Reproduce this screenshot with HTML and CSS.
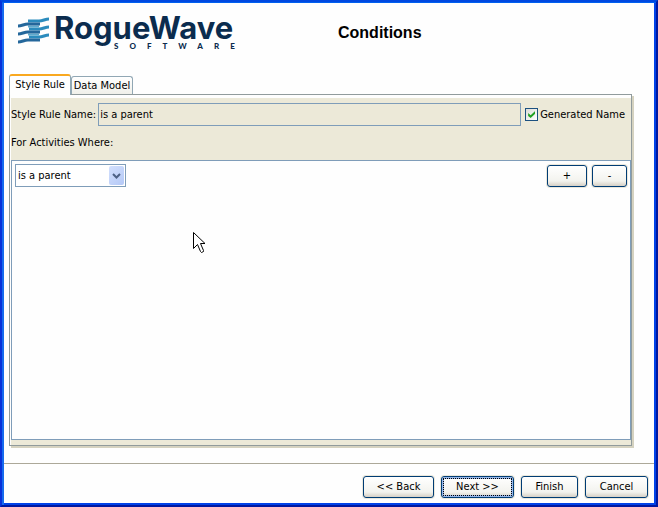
FILE: index.html
```html
<!DOCTYPE html>
<html lang="en">
<head>
    <meta charset="UTF-8">
    <meta name="viewport" content="width=device-width, initial-scale=1.0">
    <title>Conditions</title>
    <link rel="stylesheet" href="styles.css">
</head>
<body>

    <div class="window">
        <header class="header">
            <div class="logo">
                <svg class="logo-mark" width="32" height="27" viewBox="0 0 32 27" fill="none" stroke-width="3">
                    <path stroke="#2b8bbd" d="M10 4H21C25 4 27 2 31 2M11 12H21C25 12 27 10 31 10M11 20H21C25 20 27 18 31 18"/>
                    <path stroke="#5fa9cc" stroke-width="2" d="M10 9.500H21M10 17.500H21"/>
                    <path stroke="#24679b" d="M0 9C4 9 6 7 10 7H22M0 17C4 17 6 15 10 15H22M0 25C4 25 6 23 10 23H22"/>
                </svg>
                <div class="logo-text">
                    <div class="logo-name">RogueWave</div>
                    <div class="logo-sub">SOFTWARE</div>
                </div>
            </div>
            <h1 class="title">Conditions</h1>
        </header>

        <main class="content">
            <div class="tabs" role="tablist">
                <button class="tab tab-active" type="button" role="tab" aria-selected="true">Style Rule</button>
                <button class="tab" type="button" role="tab" aria-selected="false">Data Model</button>
            </div>
            <div class="panel">
                <div class="name-row">
                    <label for="rule-name">Style Rule Name:</label>
                    <input class="rule-name" id="rule-name" type="text" value="is a parent" readonly>
                    <input class="check" id="generated" type="checkbox" checked>
                    <label for="generated">Generated Name</label>
                </div>
                <label class="where" for="condition">For Activities Where:</label>
                <div class="conditions">
                    <div class="select-box">
                        <select class="select" id="condition">
                            <option>is a parent</option>
                        </select>
                        <span class="select-arrow">
                            <svg width="9" height="6" viewBox="0 0 9 6"><path d="M1 1L4.5 4.5L8 1" fill="none" stroke="#4d6185" stroke-width="2"/></svg>
                        </span>
                    </div>
                    <div class="row-buttons">
                        <button class="btn btn-add" type="button">+</button>
                        <button class="btn btn-remove" type="button">-</button>
                    </div>
                </div>
            </div>
        </main>

        <footer class="footer">
            <button class="btn btn-back" type="button">&lt;&lt; Back</button>
            <button class="btn btn-next" type="button">Next &gt;&gt;</button>
            <button class="btn btn-finish" type="button">Finish</button>
            <button class="btn btn-cancel" type="button">Cancel</button>
        </footer>

        <svg class="pointer" width="13" height="22" viewBox="0 0 13 22">
            <path d="M.5 .5V16.5L4.5 12.5L7.5 19.5L8.5 20.5L10.5 19.5V18.5L7.5 11.5H12Z" fill="#fff" stroke="#000"/>
        </svg>
    </div>

</body>
</html>
```
FILE: styles.css
```css
* {
    box-sizing: border-box;
}

body {
    margin: 0;
    color: #000;
    font-family: "DejaVu Sans Condensed", "DejaVu Sans", sans-serif;
    font-size: 11px;
    font-stretch: condensed;
    line-height: 14px;
}

button, input, select {
    margin: 0;
    padding: 0;
    color: inherit;
    font: inherit;
}

.window {
    position: relative;
    display: flex;
    flex-direction: column;
    min-height: 100vh;
    padding: 1px 2px 2px;
    background: #fefefe;
    border: 2px solid;
    border-color: #0048e0 #0018a0 #0018a0 #0831d9;
    box-shadow: inset 0 1px #0060f0, inset 2px 0 #166aee, inset -2px -2px #0042e8;
}

/* header */
.header {
    display: grid;
    grid-template-columns: 320px 1fr;
    height: 71px;
    padding: 12px 14px;
}

.logo {
    display: flex;
    gap: 4px;
}

.logo-mark {
    margin-top: 2px;
}

.logo-name {
    color: #0b2c4e;
    font-family: Inter, sans-serif;
    font-size: 31px;
    font-weight: 700;
    line-height: 26px;
}

.logo-sub {
    margin-top: 1px;
    padding-left: 60px;
    color: #0b2c4e;
    font-family: Lato, sans-serif;
    font-size: 8px;
    font-weight: 900;
    letter-spacing: 11px;
    line-height: 8px;
    white-space: nowrap;
}

.title {
    margin: 8px 0 0;
    font-family: "Liberation Sans", Arial, sans-serif;
    font-size: 16px;
    line-height: 20px;
}

/* tabs */
.content {
    display: flex;
    flex: 1;
    flex-direction: column;
    margin: 0 22px 17px 5px;
}

.tabs {
    display: flex;
    align-items: flex-end;
}

.tab {
    width: 62px;
    height: 18px;
    background: linear-gradient(#fff, #f0f0ea);
    border: 1px solid #91a7b4;
    border-bottom: 0;
    border-radius: 3px 3px 0 0;
    white-space: nowrap;
}

.tab-active {
    z-index: 1;
    height: 21px;
    margin-bottom: -1px;
    padding-bottom: 1px;
    background: #fefefe;
    border-top: 2px solid #f9a81f;
}

.panel {
    display: flex;
    flex: 1;
    flex-direction: column;
    padding: 5px 0 5px 1px;
    background: #ece9d8;
    border: 1px solid #919b9c;
    box-shadow: inset 0 3px #fefefe, inset 1px 0 #fefefe, 2px 2px #d5d2c0;
}

.name-row {
    display: flex;
    align-items: center;
    gap: 2px;
    margin: 3px 6px 0 0;
}

.rule-name {
    flex: 1;
    min-width: 0;
    height: 23px;
    padding: 0 1px;
    background: #ece9d8;
    border: 1px solid #7f9db9;
}

.check {
    display: grid;
    place-items: center;
    width: 13px;
    height: 13px;
    margin-left: 2px;
    appearance: none;
    background: linear-gradient(135deg, #dcdcd7, #fff);
    border: 1px solid #1c5180;
}

.check:checked::before {
    content: "";
    width: 7px;
    height: 7px;
    background: #21a121;
    clip-path: polygon(0 28%, 36% 60%, 100% 0, 100% 40%, 36% 100%, 0 70%);
}

.where {
    margin: 10px 0;
}

/* condition list */
.conditions {
    display: flex;
    flex: 1;
    align-items: flex-start;
    justify-content: space-between;
    padding: 3px;
    background: #fefefe;
    border: 1px solid #7f9db9;
}

.select-box {
    position: relative;
    width: 111px;
}

.select {
    width: 100%;
    height: 23px;
    padding: 0 20px 0 2px;
    appearance: none;
    background: #fff;
    border: 1px solid #7f9db9;
    border-radius: 0;
}

.select-arrow {
    position: absolute;
    top: 2px;
    right: 2px;
    display: grid;
    place-items: center;
    width: 15px;
    height: 19px;
    background: linear-gradient(135deg, #d3e0fd, #b4c8f6);
    border-radius: 2px;
    pointer-events: none;
}

.row-buttons {
    display: flex;
    gap: 5px;
    padding-top: 1px;
}

.btn {
    height: 22px;
    background: linear-gradient(#fff, #f3f3ee 75%, #d6d0c5);
    border: 1px solid #003c74;
    border-radius: 3px;
    box-shadow: 0 0 0 1px #ebe8dc;
}

.btn-add {
    width: 40px;
}

.btn-remove {
    width: 35px;
}

/* footer */
.footer {
    display: flex;
    justify-content: flex-end;
    gap: 7px;
    padding: 12px 6px 5px;
    border-top: 1px solid #aca899;
}

.btn-back {
    width: 71px;
}

.btn-next {
    width: 73px;
    outline: 1px dotted #000;
    outline-offset: -3px;
    box-shadow: inset 0 0 0 2px #98b8ea, 0 0 0 1px #ebe8dc;
}

.btn-finish {
    width: 57px;
}

.btn-cancel {
    width: 63px;
}

.pointer {
    position: absolute;
    top: 230px;
    left: 191px;
    pointer-events: none;
}
```
